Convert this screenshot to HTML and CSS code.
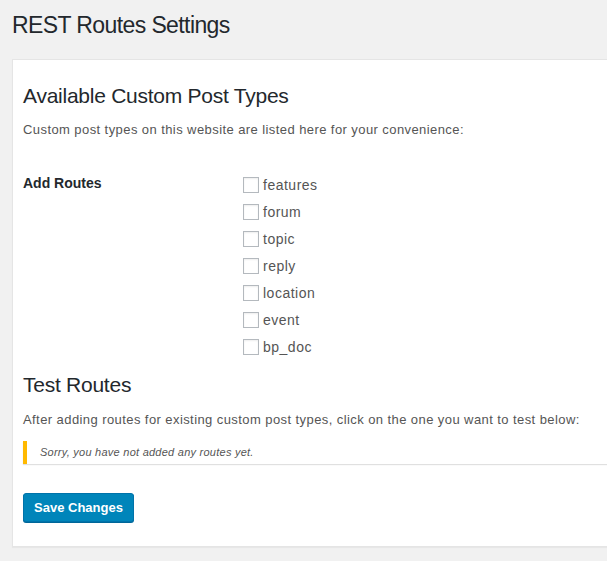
FILE: index.html
```html
<!DOCTYPE html>
<html>
<head>
<meta charset="utf-8">
<link rel="stylesheet" href="styles.css">
</head>
<body>
<div class="wrap">
  <h1 class="page-title">REST Routes Settings</h1>
  <div class="panel">
    <h2 class="section-title">Available Custom Post Types</h2>
    <p class="desc">Custom post types on this website are listed here for your convenience:</p>
    <div class="form-row">
      <div class="label">Add Routes</div>
      <div class="checks">
        <label class="check"><span class="box"></span>features</label>
        <label class="check"><span class="box"></span>forum</label>
        <label class="check"><span class="box"></span>topic</label>
        <label class="check"><span class="box"></span>reply</label>
        <label class="check"><span class="box"></span>location</label>
        <label class="check"><span class="box"></span>event</label>
        <label class="check"><span class="box"></span>bp_doc</label>
      </div>
    </div>
    <h2 class="section-title test">Test Routes</h2>
    <p class="desc">After adding routes for existing custom post types, click on the one you want to test below:</p>
    <div class="notice">Sorry, you have not added any routes yet.</div>
    <button class="btn">Save Changes</button>
  </div>
</div>
</body>
</html>
```
FILE: styles.css
```css
html, body {
  margin: 0;
  padding: 0;
  background: #f1f1f1;
  font-family: "Liberation Sans", Arial, sans-serif;
  color: #444;
}
.wrap {
  padding: 0 0 0 12px;
  height: 561px;
  overflow: hidden;
}
.page-title {
  margin: 0;
  padding-top: 11px;
  height: 48px;
  font-size: 23px;
  font-weight: 400;
  color: #23282d;
  line-height: 29px;
  letter-spacing: -0.6px;
}
.panel {
  background: #fff;
  border: 1px solid #e5e5e5;
  border-right: none;
  box-shadow: 0 1px 1px rgba(0,0,0,0.04);
  padding: 22px 0 24px 10px;
  height: 440px;
}
.section-title {
  margin: 0;
  font-size: 21px;
  font-weight: 400;
  color: #23282d;
  line-height: 27px;
  letter-spacing: -0.25px;
}
.desc {
  margin: 11px 0 0;
  font-size: 13px;
  line-height: 20px;
  color: #555;
  letter-spacing: 0.42px;
}
.form-row {
  display: flex;
  margin-top: 32px;
}
.label {
  width: 220px;
  font-size: 14px;
  font-weight: 700;
  color: #23282d;
  line-height: 20px;
  padding-top: 1px;
}
.checks {
  display: flex;
  flex-direction: column;
  gap: 7px;
  padding-top: 3px;
}
.check {
  display: flex;
  align-items: center;
  font-size: 14px;
  color: #555;
  line-height: 20px;
  height: 20px;
  letter-spacing: 0.5px;
}
.box {
  width: 14px;
  height: 14px;
  border: 1px solid #b4b9be;
  background: #fff;
  box-shadow: inset 0 1px 2px rgba(0,0,0,0.07);
  margin-right: 4px;
  margin-top: -1px;
}
.section-title.test {
  margin-top: 14px;
}
.test + .desc {
  margin-top: 12px;
}
.notice {
  margin-top: 11px;
  border-left: 4px solid #ffb900;
  background: #fff;
  box-shadow: 0 1px 1px rgba(0,0,0,0.12);
  font-size: 11px;
  font-style: italic;
  color: #555;
  padding: 0 0 0 13px;
  height: 23px;
  line-height: 23px;
  letter-spacing: 0.25px;
}
.btn {
  display: block;
  margin-top: 29px;
  background: #0085ba;
  border: 1px solid #0073aa;
  border-radius: 3px;
  box-shadow: 0 1px 0 #006799;
  color: #fff;
  font-family: "Liberation Sans", Arial, sans-serif;
  font-size: 13px;
  font-weight: 700;
  height: 29px;
  width: 111px;
  padding: 0;
  line-height: 26px;
}
```
